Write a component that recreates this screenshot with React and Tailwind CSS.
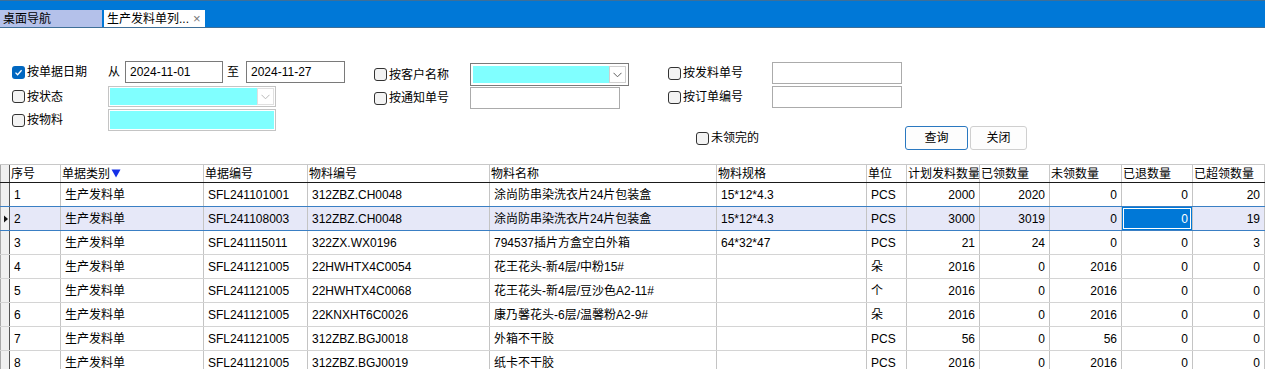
import React from "react";

const columns = [
  { key: "no", title: "序号", w: "w-[51px]" },
  { key: "type", title: "单据类别", w: "w-[143px]", sort: true },
  { key: "bill", title: "单据编号", w: "w-[104px]" },
  { key: "code", title: "物料编号", w: "w-[182px]" },
  { key: "name", title: "物料名称", w: "w-[227px]" },
  { key: "spec", title: "物料规格", w: "w-[150px]" },
  { key: "unit", title: "单位", w: "w-[40px]" },
  { key: "plan", title: "计划发料数量", w: "w-[73px]", num: true },
  { key: "got", title: "已领数量", w: "w-[70px]", num: true },
  { key: "left", title: "未领数量", w: "w-[72px]", num: true },
  { key: "back", title: "已退数量", w: "w-[71px]", num: true },
  { key: "over", title: "已超领数量", w: "w-[72px]", num: true },
];

const rows = [
  ["1", "生产发料单", "SFL241101001", "312ZBZ.CH0048", "涂尚防串染洗衣片24片包装盒", "15*12*4.3", "PCS", "2000", "2020", "0", "0", "20"],
  ["2", "生产发料单", "SFL241108003", "312ZBZ.CH0048", "涂尚防串染洗衣片24片包装盒", "15*12*4.3", "PCS", "3000", "3019", "0", "0", "19"],
  ["3", "生产发料单", "SFL241115011", "322ZX.WX0196", "794537插片方盒空白外箱", "64*32*47", "PCS", "21", "24", "0", "0", "3"],
  ["4", "生产发料单", "SFL241121005", "22HWHTX4C0054", "花王花头-新4层/中粉15#", "", "朵", "2016", "0", "2016", "0", "0"],
  ["5", "生产发料单", "SFL241121005", "22HWHTX4C0068", "花王花头-新4层/豆沙色A2-11#", "", "个", "2016", "0", "2016", "0", "0"],
  ["6", "生产发料单", "SFL241121005", "22KNXHT6C0026", "康乃馨花头-6层/温馨粉A2-9#", "", "朵", "2016", "0", "2016", "0", "0"],
  ["7", "生产发料单", "SFL241121005", "312ZBZ.BGJ0018", "外箱不干胶", "", "PCS", "56", "0", "56", "0", "0"],
  ["8", "生产发料单", "SFL241121005", "312ZBZ.BGJ0019", "纸卡不干胶", "", "PCS", "2016", "0", "2016", "0", "0"],
];

const SELECTED = 1;

// small square checkbox with label
const Check = ({ label, checked, className = "" }) => (
  <div className={`flex items-center gap-[2px] ${className}`}>
    {checked ? (
      <span className="flex h-[13px] w-[13px] items-center justify-center rounded-[3px] bg-[#0067c0]">
        <svg width="9" height="9" viewBox="0 0 9 9">
          <path d="M1.5 4.6 L3.6 6.7 L7.6 2.3" fill="none" stroke="#fff" strokeWidth="1.3" />
        </svg>
      </span>
    ) : (
      <span className="h-[13px] w-[13px] rounded-[3px] border border-[#333] bg-[#f3f3f3]" />
    )}
    <span className="whitespace-nowrap">{label}</span>
  </div>
);

const Chevron = ({ color }) => (
  <svg width="9" height="6" viewBox="0 0 9 6">
    <path d="M0.5 0.8 L4.5 4.8 L8.5 0.8" fill="none" stroke={color} strokeWidth="1" />
  </svg>
);

const Combo = ({ w, h, dark }) => (
  <div
    className={`flex ${w} ${h} border ${
      dark ? "border-[#7a7a7a] p-[2px]" : "border-[#c4c4c4] p-[1px]"
    } bg-white`}
  >
    <div className="flex-1 bg-[#80ffff]" />
    <div
      className={`flex w-[17px] items-center justify-center border ${
        dark ? "border-[#d0d0d0]" : "border-[#e0e0e0]"
      } bg-white`}
    >
      <Chevron color={dark ? "#606060" : "#b8b8b8"} />
    </div>
  </div>
);

const TextBox = ({ w, value, dark, cyan }) => (
  <div
    className={`flex h-[22px] ${w} items-center border ${
      dark ? "border-[#7a7a7a]" : cyan ? "border-[#c4c4c4] p-[1px]" : "border-[#ababab]"
    } bg-white`}
  >
    {cyan ? <div className="h-full w-full bg-[#80ffff]" /> : <span className="pl-[4px]">{value}</span>}
  </div>
);

const Filters = () => (
  <div className="flex h-[136px] pl-[12px] pt-[33px]">
    <div className="w-[362px]">
      <div className="flex h-[22px] items-center">
        <Check label="按单据日期" checked className="w-[96px]" />
        <span className="w-[17px]">从</span>
        <TextBox w="w-[98px]" value="2024-11-01" dark />
        <span className="w-[23px] pl-[4px]">至</span>
        <TextBox w="w-[99px]" value="2024-11-27" dark />
      </div>
      <div className="mt-[3px] flex h-[21px] items-center">
        <Check label="按状态" className="w-[96px]" />
        <Combo w="w-[168px]" h="h-[21px]" />
      </div>
      <div className="mt-[2px] flex h-[22px] items-center">
        <Check label="按物料" className="w-[96px]" />
        <TextBox w="w-[168px]" cyan />
      </div>
    </div>

    <div className="w-[294px] pt-[2px]">
      <div className="flex h-[23px] items-center">
        <Check label="按客户名称" className="w-[96px]" />
        <Combo w="w-[159px]" h="h-[23px]" dark />
      </div>
      <div className="mt-[1px] flex h-[22px] items-center">
        <Check label="按通知单号" className="w-[96px]" />
        <TextBox w="w-[150px]" />
      </div>
    </div>

    <div className="pt-[1px]">
      <div className="flex h-[22px] items-center">
        <Check label="按发料单号" className="w-[104px]" />
        <TextBox w="w-[130px]" />
      </div>
      <div className="mt-[2px] flex h-[22px] items-center">
        <Check label="按订单编号" className="w-[104px]" />
        <TextBox w="w-[130px]" />
      </div>
      <div className="mt-[18px] flex h-[24px] items-center pl-[28px]">
        <Check label="未领完的" className="w-[209px]" />
        <button className="h-[24px] w-[63px] rounded-[3px] border border-[#2a78c0] bg-[#fdfdfd]">查询</button>
        <button className="ml-[2px] h-[24px] w-[57px] rounded-[3px] border border-[#cfcfcf] bg-[#fdfdfd]">关闭</button>
      </div>
    </div>
  </div>
);

const Grid = () => (
  <div>
    <div className="flex h-[19px] border-y border-t-[#c8c8c8] border-b-[#1a1a1a]">
      <div className="w-[10px] border-x border-l-[#a8a8a8] border-r-[#555] bg-[#f0f0f0]" />
      {columns.map((c) => (
        <div
          key={c.key}
          className={`${c.w} flex items-center overflow-hidden whitespace-nowrap border-r border-[#c8c8c8] pl-[1px]`}
        >
          {c.title}
          {c.sort && (
            <svg width="10" height="9" viewBox="0 0 10 9" className="ml-[1px]">
              <path d="M0.5 0.5 L9.5 0.5 L5 8.5 Z" fill="#1530e8" />
            </svg>
          )}
        </div>
      ))}
    </div>
    {rows.map((r, i) => {
      const sel = i === SELECTED;
      const blueBottom = i === SELECTED || i === SELECTED - 1;
      return (
        <div
          key={i}
          className={`flex h-[24px] border-b ${blueBottom ? "border-[#3a7fc4]" : "border-[#d4d4d4]"} ${
            sel ? "bg-[#e6e8f8]" : "bg-white"
          }`}
        >
          <div className="flex w-[10px] items-center border-x border-l-[#a8a8a8] border-r-[#555] bg-[#f0f0f0]">
            {sel && (
              <svg width="6" height="8" viewBox="0 0 6 8" className="ml-[2px]">
                <path d="M1 0.5 L5 4 L1 7.5 Z" fill="#111" />
              </svg>
            )}
          </div>
          {columns.map((c, j) => {
            const focus = sel && c.key === "back";
            return (
              <div
                key={c.key}
                className={`${c.w} flex items-center overflow-hidden whitespace-nowrap border-r border-[#c4c4c4] ${
                  c.num ? "justify-end pr-[4px]" : "pl-[4px]"
                } ${focus ? "bg-[#0078d7] text-white shadow-[inset_0_0_0_1px_#0078d7,inset_0_0_0_2px_#ffffff]" : ""}`}
              >
                {r[j]}
              </div>
            );
          })}
        </div>
      );
    })}
  </div>
);

export default function App() {
  return (
    <div className="h-[369px] w-[1265px] overflow-hidden bg-white font-[family-name:Liberation_Sans,Noto_Sans_CJK_SC,sans-serif] text-[12px] text-black">
      <div className="flex h-[28px] items-end border-y border-[#3e6f98] bg-[#0078d7]">
        <div className="flex h-[17px] w-[102px] items-center bg-[#b4c1ea] pl-[3px]">桌面导航</div>
        <div className="ml-[2px] flex h-[17px] w-[101px] items-center bg-white pl-[3px]">
          生产发料单列...
          <span className="ml-[4px] text-[13px] leading-none text-[#777]">×</span>
        </div>
      </div>
      <Filters />
      <Grid />
    </div>
  );
}
